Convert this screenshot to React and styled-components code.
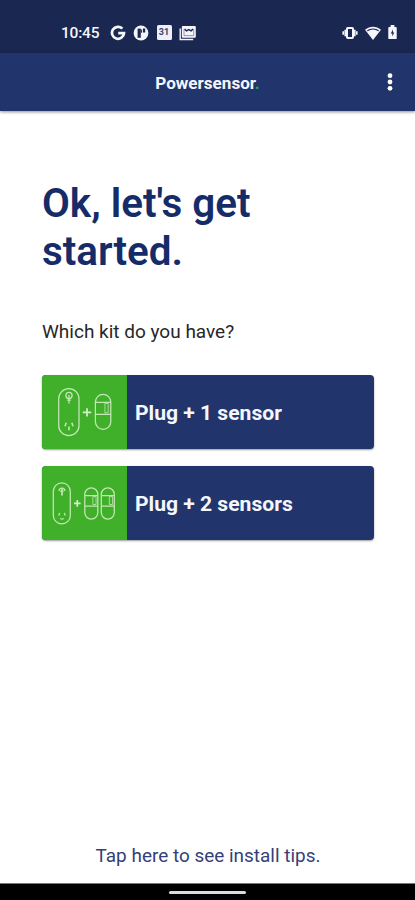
import React from "react";
import styled, { createGlobalStyle } from "styled-components";

const GlobalStyle = createGlobalStyle`
  * { box-sizing: border-box; }
  body { margin: 0; background: #fff; font-family: Roboto, "Liberation Sans", sans-serif; }
  button { font: inherit; border: 0; padding: 0; cursor: pointer; }
`;

const Screen = styled.div`
  width: 100%;
  max-width: 415px;
  height: 900px;
  display: flex;
  flex-direction: column;
  overflow: hidden;
  background: #fff;
`;

const StatusBar = styled.div`
  height: 53px;
  flex: none;
  display: flex;
  justify-content: space-between;
  padding: 13px 18px 0 61px;
  background: #1a2751;
  color: #f4f6fb;
`;

const StatusGroup = styled.div`
  height: 39px;
  display: flex;
  align-items: center;
  gap: ${(p) => p.$gap}px;
`;

const Clock = styled.span`
  width: 38px;
  margin-right: 3px;
  font-size: 15.5px;
  font-weight: 500;
  line-height: 20px;
  letter-spacing: -0.2px;
  white-space: nowrap;
`;

const AppBar = styled.header`
  height: 58px;
  flex: none;
  display: grid;
  grid-template-columns: 50px 1fr 50px;
  align-items: center;
  background: #21356c;
  box-shadow: 0 1px 3px rgba(0, 0, 0, 0.45);
`;

const Brand = styled.div`
  grid-column: 2;
  padding-top: 2px;
  text-align: center;
  font-size: 17.1px;
  font-weight: 700;
  line-height: 22px;
  color: #f4f6fc;
`;

const BrandDot = styled.span`
  color: #35a83a;
`;

const MenuButton = styled.button`
  height: 40px;
  display: grid;
  place-items: center;
  background: none;
  color: #fff;
`;

const Content = styled.main`
  flex: 1;
  display: flex;
  flex-direction: column;
  padding: 69px 41px 0 42px;
`;

const Title = styled.h1`
  margin: 0;
  font-size: 40.4px;
  font-weight: 600;
  line-height: 48px;
  color: #152c68;
`;

const Question = styled.p`
  margin: 44px 0 0;
  font-size: 19px;
  line-height: 24px;
  color: #272727;
`;

const KitList = styled.div`
  margin-top: 31px;
  display: flex;
  flex-direction: column;
  gap: 17px;
`;

const KitButton = styled.button`
  height: 74px;
  display: flex;
  align-items: stretch;
  overflow: hidden;
  border-radius: 4px;
  background: #21356c;
  box-shadow: 0 1px 2px rgba(0, 0, 0, 0.4);
`;

const KitPicture = styled.span`
  width: 85px;
  flex: none;
  display: block;
  background: #40b02b;
`;

const KitLabel = styled.span`
  align-self: center;
  padding: 2px 0 0 8px;
  font-size: 21.1px;
  font-weight: 700;
  line-height: 26px;
  color: #f5f7fd;
`;

const TipsLink = styled.button`
  margin-top: auto;
  margin-bottom: 15px;
  background: none;
  font-size: 18.95px;
  line-height: 24px;
  color: #343f78;
`;

const NavBar = styled.div`
  height: 17px;
  flex: none;
  display: flex;
  justify-content: center;
  align-items: center;
  border-top: 1px solid #777;
  background: #000;
`;

const HomeHandle = styled.div`
  width: 77px;
  height: 3px;
  border-radius: 2px;
  background: #dedbde;
`;

const GoogleIcon = () => (
  <svg width="16" height="16" viewBox="0 0 16 16" fill="none" stroke="currentColor" strokeWidth="2.7">
    <path d="M12.4 3.7A6 6 0 1 0 14 8.1H8.2" />
  </svg>
);

const PandoraIcon = () => (
  <svg width="16" height="16" viewBox="0 0 16 16">
    <circle cx="8" cy="8" r="7.4" fill="currentColor" />
    <path d="M4.6 3.6h3.2v9.2H4.6z" fill="#1a2751" />
    <path d="M7.8 4.6h1.1v3.1H7.8zM9.9 3.6h2.3v3.8H9.9z" fill="#1a2751" />
  </svg>
);

const CalendarDay = styled.span`
  width: 15px;
  height: 15px;
  display: grid;
  place-items: center;
  border-radius: 1.5px;
  background: #eef0f5;
  color: #36446e;
  font-size: 9px;
  font-weight: 700;
  line-height: 15px;
`;

const MailIcon = () => (
  <svg width="18" height="16" viewBox="0 0 18 16">
    <path d="M1.2 3.5v11h13" fill="none" stroke="currentColor" strokeWidth="1.4" />
    <rect x="2.8" y="1" width="14" height="11.8" rx="1" fill="currentColor" />
    <path d="M5.5 4l2 1.8 2.3-1.2 2.3 1.2 2-1.8" fill="none" stroke="#1a2751" strokeWidth="1.5" />
    <path d="M5 4v6.6h9.7V4" fill="none" stroke="#75809f" strokeWidth=".8" />
  </svg>
);

const VibrateIcon = () => (
  <svg width="16" height="14" viewBox="0 0 16 14" fill="none" stroke="currentColor">
    <rect x="5" y="2" width="6" height="10" rx=".8" strokeWidth="2" />
    <path d="M3.2 3.8v6.4M12.8 3.8v6.4" strokeWidth="1.6" />
    <path d="M1.2 5.3v3.4M14.8 5.3v3.4" strokeWidth="1.6" />
  </svg>
);

const WifiIcon = () => (
  <svg width="16" height="14" viewBox="0 0 16 14">
    <path d="M0 3.8C4.8-.4 11.2-.4 16 3.8L8 14z" fill="currentColor" />
    <path d="M2.3 4.8C5.6 2.5 10.4 2.5 13.7 4.8" fill="none" stroke="#1a2751" strokeWidth="1.2" />
  </svg>
);

const BatteryIcon = () => (
  <svg width="9" height="15" viewBox="0 0 9 16">
    <path d="M2.5 0h4v2H8q1 0 1 1v11q0 1-1 1H1q-1 0-1-1V3q0-1 1-1h1.5z" fill="currentColor" />
    <path d="M5 4.8L2.6 9h1.7v3.2L6.4 8H5z" fill="#1a2751" />
  </svg>
);

const MoreIcon = () => (
  <svg width="6" height="18" viewBox="0 0 6 18" fill="currentColor">
    <circle cx="3" cy="2.7" r="2.4" />
    <circle cx="3" cy="9" r="2.4" />
    <circle cx="3" cy="15.3" r="2.4" />
  </svg>
);

const Sensor = ({ x, y, width, height, top, bottom }) => (
  <g transform={`translate(${x} ${y})`}>
    <rect width={width} height={height} rx={width / 2} />
    <path d={`M0 ${top}h${width}M0 ${bottom}h${width}`} />
    <path d={`M${width * 0.62} ${top + 1}h3.2v${bottom - top - 2.5}h-3.2z`} strokeWidth=".8" />
  </g>
);

const KitDrawing = ({ sensors }) => (
  <svg width="85" height="74" viewBox="0 0 85 74" fill="none" stroke="#c4e8b5" strokeWidth="1.25">
    {sensors === 1 ? (
      <>
        <rect x="16.7" y="13.6" width="20.3" height="47" rx="10.15" />
        <circle cx="27" cy="20.5" r="3.1" />
        <path d="M27 20v8.5M25.2 25h3.6" />
        <path d="M24.2 47.8l-1.2 3.4M29.8 47.8l1.2 3.4M27 51.6v3.6" strokeWidth="1.6" />
        <path d="M40.8 37.4h8.4M45 33.2v8.4" stroke="#d9f0cf" strokeWidth="1.7" />
        <Sensor x={53.4} y={19.4} width={15.4} height={35} top={8} bottom={20} />
      </>
    ) : (
      <>
        <rect x="11.3" y="16.9" width="17" height="41" rx="8.5" />
        <path d="M17.1 25a2.9 2.9 0 1 1 5.8 0M18.3 25.2h3.4" />
        <path d="M20 23v6.5" strokeWidth="1.7" />
        <path d="M17.6 46.8l-.8 2.8M22.4 46.8l.8 2.8M18.2 52.4q1.8 1.6 3.6 0" />
        <path d="M32 37.4h6.6M35.3 34.1v6.6" stroke="#d9f0cf" strokeWidth="1.6" />
        <Sensor x={42.8} y={21.8} width={13} height={31.3} top={7.8} bottom={18.2} />
        <Sensor x={59.3} y={21.8} width={13} height={31.3} top={7.8} bottom={18.2} />
      </>
    )}
  </svg>
);

const kits = [
  { label: "Plug + 1 sensor", sensors: 1 },
  { label: "Plug + 2 sensors", sensors: 2 },
];

export default function App() {
  return (
    <>
      <GlobalStyle />
      <Screen>
        <StatusBar>
          <StatusGroup $gap={7.5}>
            <Clock>10:45</Clock>
            <GoogleIcon />
            <PandoraIcon />
            <CalendarDay>31</CalendarDay>
            <MailIcon />
          </StatusGroup>
          <StatusGroup $gap={7}>
            <VibrateIcon />
            <WifiIcon />
            <BatteryIcon />
          </StatusGroup>
        </StatusBar>
        <AppBar>
          <Brand>
            Powersensor<BrandDot>.</BrandDot>
          </Brand>
          <MenuButton aria-label="Menu">
            <MoreIcon />
          </MenuButton>
        </AppBar>
        <Content>
          <Title>Ok, let's get started.</Title>
          <Question>Which kit do you have?</Question>
          <KitList>
            {kits.map((kit) => (
              <KitButton key={kit.sensors}>
                <KitPicture>
                  <KitDrawing sensors={kit.sensors} />
                </KitPicture>
                <KitLabel>{kit.label}</KitLabel>
              </KitButton>
            ))}
          </KitList>
          <TipsLink>Tap here to see install tips.</TipsLink>
        </Content>
        <NavBar>
          <HomeHandle />
        </NavBar>
      </Screen>
    </>
  );
}
